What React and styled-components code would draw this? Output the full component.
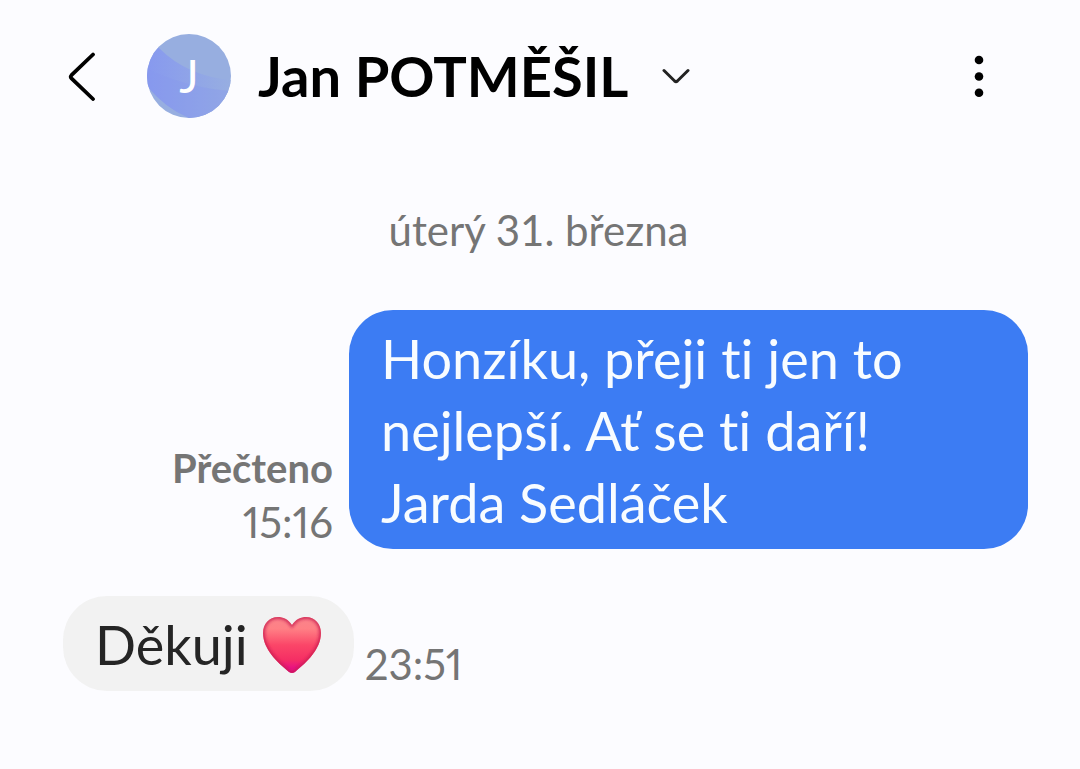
import React from 'react';
import styled, { createGlobalStyle } from 'styled-components';

const messages = [
  {
    id: 1,
    sent: true,
    text: 'Honzíku, přeji ti jen to nejlepší. Ať se ti daří!\nJarda Sedláček',
    status: 'Přečteno',
    time: '15:16',
  },
  { id: 2, sent: false, text: 'Děkuji', heart: true, time: '23:51' },
];

const heartPath =
  'M30 9C26 3 21 1 16 1C7 1 1 8 1 17C1 33 15 46 27 56Q30 58 33 56C45 46 59 33 59 17C59 8 53 1 44 1C39 1 34 3 30 9Z';

const Heart = () => (
  <HeartIcon viewBox="0 0 60 58" role="img" aria-label="srdce">
    <defs>
      <linearGradient id="heartFill" x1="0" y1="0" x2="0" y2="1">
        <stop offset="0" stopColor="#f9858c" />
        <stop offset="0.22" stopColor="#ff8085" />
        <stop offset="0.5" stopColor="#fb4668" />
        <stop offset="0.75" stopColor="#f52f64" />
        <stop offset="0.88" stopColor="#ea1580" />
        <stop offset="1" stopColor="#e00a90" />
      </linearGradient>
      <clipPath id="heartClip">
        <path d={heartPath} />
      </clipPath>
      <filter id="heartSoft">
        <feGaussianBlur stdDeviation="1.6" />
      </filter>
    </defs>
    <g clipPath="url(#heartClip)">
      <rect width="60" height="58" fill="url(#heartFill)" />
      <path
        d={heartPath}
        fill="none"
        stroke="#c9184f"
        strokeOpacity="0.8"
        strokeWidth="4"
        filter="url(#heartSoft)"
      />
    </g>
  </HeartIcon>
);

const ChatHeader = ({ name }) => (
  <Header>
    <IconButton type="button" aria-label="Zpět">
      <svg width="28" height="50" viewBox="0 0 28 50" fill="none">
        <path
          d="M25 3.500L3.500 24.200Q2 25.800 3.500 27.400L25 48"
          stroke="#000"
          strokeWidth="3.800"
          strokeLinecap="round"
        />
      </svg>
    </IconButton>
    <Avatar>
      <AvatarShape viewBox="0 0 84 84" aria-hidden="true">
        <defs>
          <linearGradient id="avatarBand" x1="0" y1="0" x2="1" y2="0">
            <stop offset="0" stopColor="#8799ef" />
            <stop offset="1" stopColor="#97aee1" />
          </linearGradient>
          <clipPath id="avatarClip">
            <circle cx="42" cy="42" r="42" />
          </clipPath>
        </defs>
        <g clipPath="url(#avatarClip)">
          <rect width="84" height="84" fill="#97aee0" />
          <path d="M0 0L12 14Q40 42 84 46V84H42Q18 74 0 52Z" fill="url(#avatarBand)" />
          <path d="M0 35Q42 54 84 57V84H42Q18 74 0 52Z" fill="#8799ee" fillOpacity="0.35" />
        </g>
      </AvatarShape>
      <Initial>J</Initial>
    </Avatar>
    <NameButton type="button">
      <Name>{name}</Name>
      <svg width="28" height="16" viewBox="0 0 28 16" fill="none" aria-hidden="true">
        <path
          d="M2 2.500L12.600 13Q14 14.200 15.400 13L26 2.500"
          stroke="#222"
          strokeWidth="3"
          strokeLinecap="round"
        />
      </svg>
    </NameButton>
    <MenuButton type="button" aria-label="Další možnosti">
      <svg width="10" height="42" viewBox="0 0 10 42">
        <circle cx="5" cy="5" r="4.300" />
        <circle cx="5" cy="21.500" r="4.300" />
        <circle cx="5" cy="37.700" r="4.300" />
      </svg>
    </MenuButton>
  </Header>
);

const Message = ({ sent, text, heart, status, time }) => (
  <Row>
    {sent && (
      <SentMeta>
        <Status>{status}</Status>
        <Time>{time}</Time>
      </SentMeta>
    )}
    <Bubble $sent={sent}>
      {text}
      {heart && <Heart />}
    </Bubble>
    {!sent && <Time>{time}</Time>}
  </Row>
);

const App = () => (
  <>
    <GlobalStyle />
    <Page>
      <ChatHeader name="Jan POTMĚŠIL" />
      <Thread>
        <DateLabel>úterý 31. března</DateLabel>
        {messages.map((message) => (
          <Message key={message.id} {...message} />
        ))}
      </Thread>
    </Page>
  </>
);

export default App;

const GlobalStyle = createGlobalStyle`
  * {
    box-sizing: border-box;
  }
  body {
    margin: 0;
    background: #fcfcff;
    color: #252525;
    font-family: Lato, "Liberation Sans", sans-serif;
    font-variant-ligatures: none;
  }
  button {
    padding: 0;
    border: none;
    background: none;
    color: inherit;
    font: inherit;
    cursor: pointer;
  }
`;
const Page = styled.div`
  min-height: 100vh;
`;
const Header = styled.header`
  display: flex;
  align-items: center;
  height: 152px;
  padding: 0 92px 0 68px;
`;
const IconButton = styled.button`
  display: flex;
  align-items: center;
`;
const Avatar = styled.div`
  position: relative;
  display: flex;
  align-items: center;
  justify-content: center;
  width: 84px;
  height: 84px;
  margin-left: 51px;
`;
const AvatarShape = styled.svg`
  position: absolute;
  inset: 0;
`;
const Initial = styled.span`
  position: relative;
  color: #fff;
  font-size: 46px;
  line-height: 48px;
`;
const NameButton = styled.button`
  display: flex;
  align-items: center;
  gap: 34px;
  margin-left: 27px;
`;
const Name = styled.h1`
  margin: 0;
  color: #000;
  font-size: 56px;
  font-weight: 700;
  line-height: 72px;
  white-space: nowrap;
`;
const MenuButton = styled(IconButton)`
  margin-left: auto;
  padding: 0 4px;
`;
const Thread = styled.main`
  display: flex;
  flex-direction: column;
  gap: 47px;
  padding: 54px 52px 48px 63px;
`;
const DateLabel = styled.div`
  margin: 0 14px 9px 0;
  color: #757575;
  font-size: 42px;
  line-height: 48px;
  text-align: center;
`;
const Row = styled.div`
  display: flex;
  align-items: flex-end;
`;
const SentMeta = styled.div`
  flex: 0 0 270px;
  margin-right: 16px;
  text-align: right;
`;
const Status = styled.div`
  color: #757575;
  font-size: 40px;
  font-weight: 700;
  line-height: 54px;
`;
const Time = styled.div`
  color: #757575;
  font-size: 42px;
  font-variant-numeric: proportional-nums;
  line-height: 54px;
`;
const Bubble = styled.div`
  flex: ${(props) => (props.$sent ? '1' : '0 1 auto')};
  display: ${(props) => (props.$sent ? 'block' : 'flex')};
  align-items: center;
  gap: 14px;
  margin-right: ${(props) => (props.$sent ? '0' : '11px')};
  padding: 13px 32px 10px;
  border-radius: 44px;
  background: ${(props) => (props.$sent ? '#3c7cf3' : '#f2f2f2')};
  color: ${(props) => (props.$sent ? '#f8fcff' : '#252525')};
  font-size: 54px;
  line-height: 72px;
  white-space: pre-line;
`;
const HeartIcon = styled.svg`
  flex: none;
  width: 60px;
  height: 58px;
`;
